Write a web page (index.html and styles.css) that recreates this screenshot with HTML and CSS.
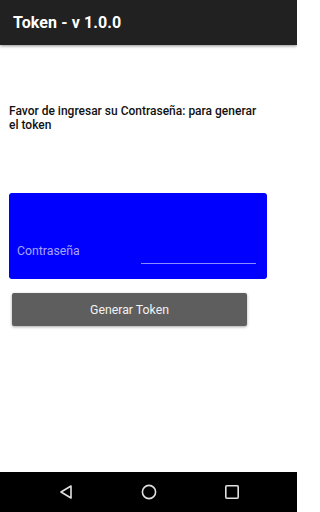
FILE: index.html
```html
<!DOCTYPE html>
<html>
<head>
<meta charset="utf-8">
<link rel="stylesheet" href="styles.css">
</head>
<body>
<div class="screen">
  <header class="appbar"><span class="title">Token - v 1.0.0</span></header>
  <main class="content">
    <p class="intro">Favor de ingresar su Contraseña: para generar el token</p>
    <div class="card">
      <span class="label">Contraseña</span>
      <span class="field"></span>
    </div>
    <button class="btn">Generar Token</button>
  </main>
  <nav class="navbar">
    <svg class="nav-icon" width="16" height="16" viewBox="0 0 16 16"><path d="M13 2 L3 8 L13 14 Z" fill="none" stroke="#e0e0e0" stroke-width="1.6" stroke-linejoin="round"/></svg>
    <svg class="nav-icon" width="16" height="16" viewBox="0 0 16 16"><circle cx="8" cy="8" r="6.6" fill="none" stroke="#e0e0e0" stroke-width="1.6"/></svg>
    <svg class="nav-icon" width="16" height="16" viewBox="0 0 16 16"><rect x="1.8" y="1.8" width="12.4" height="12.4" rx="1" fill="none" stroke="#e0e0e0" stroke-width="1.6"/></svg>
  </nav>
</div>
</body>
</html>
```
FILE: styles.css
```css
* { box-sizing: border-box; }
html, body { margin: 0; padding: 0; background: #fff; }
body { font-family: Roboto, "Liberation Sans", sans-serif; }
.screen { width: 297px; height: 512px; display: flex; flex-direction: column; overflow: hidden; }
.appbar {
  height: 45px; background: #212121; display: flex; align-items: center;
  padding-left: 13px; box-shadow: 0 1px 3px rgba(0,0,0,0.45); position: relative; z-index: 1;
}
.title { color: #fff; font-weight: 700; font-size: 16px; letter-spacing: 0.1px; }
.content { flex: 1; display: flex; flex-direction: column; align-items: flex-start; }
.intro {
  margin: 59px 0 0 9px; width: 256px; font-size: 12px; font-weight: 500; line-height: 14px; color: #111;
}
.card {
  margin: 61px 0 0 9px; width: 258px; height: 86px; background: #0000ff; border-radius: 3px;
  display: flex; align-items: flex-end; justify-content: space-between; padding: 0 11px 15px 8px;
}
.label { color: #a6a6ff; font-size: 12.3px; line-height: 14px; margin-bottom: 6px; }
.field { width: 115px; height: 1.5px; background: #8c8cff; }
.btn {
  margin: 14px 0 0 12px; width: 235px; height: 33px; background: #5e5e5e; border: none; border-radius: 2px;
  color: #f2f2f2; font-family: Roboto, "Liberation Sans", sans-serif; font-size: 12.3px;
  box-shadow: 0 1px 3px rgba(0,0,0,0.35); padding: 0;
}
.navbar {
  height: 40px; background: #000; display: flex; align-items: center; gap: 67px;
  padding: 0 0 0 58px;
}
.nav-icon { display: block; flex: none; }
```
